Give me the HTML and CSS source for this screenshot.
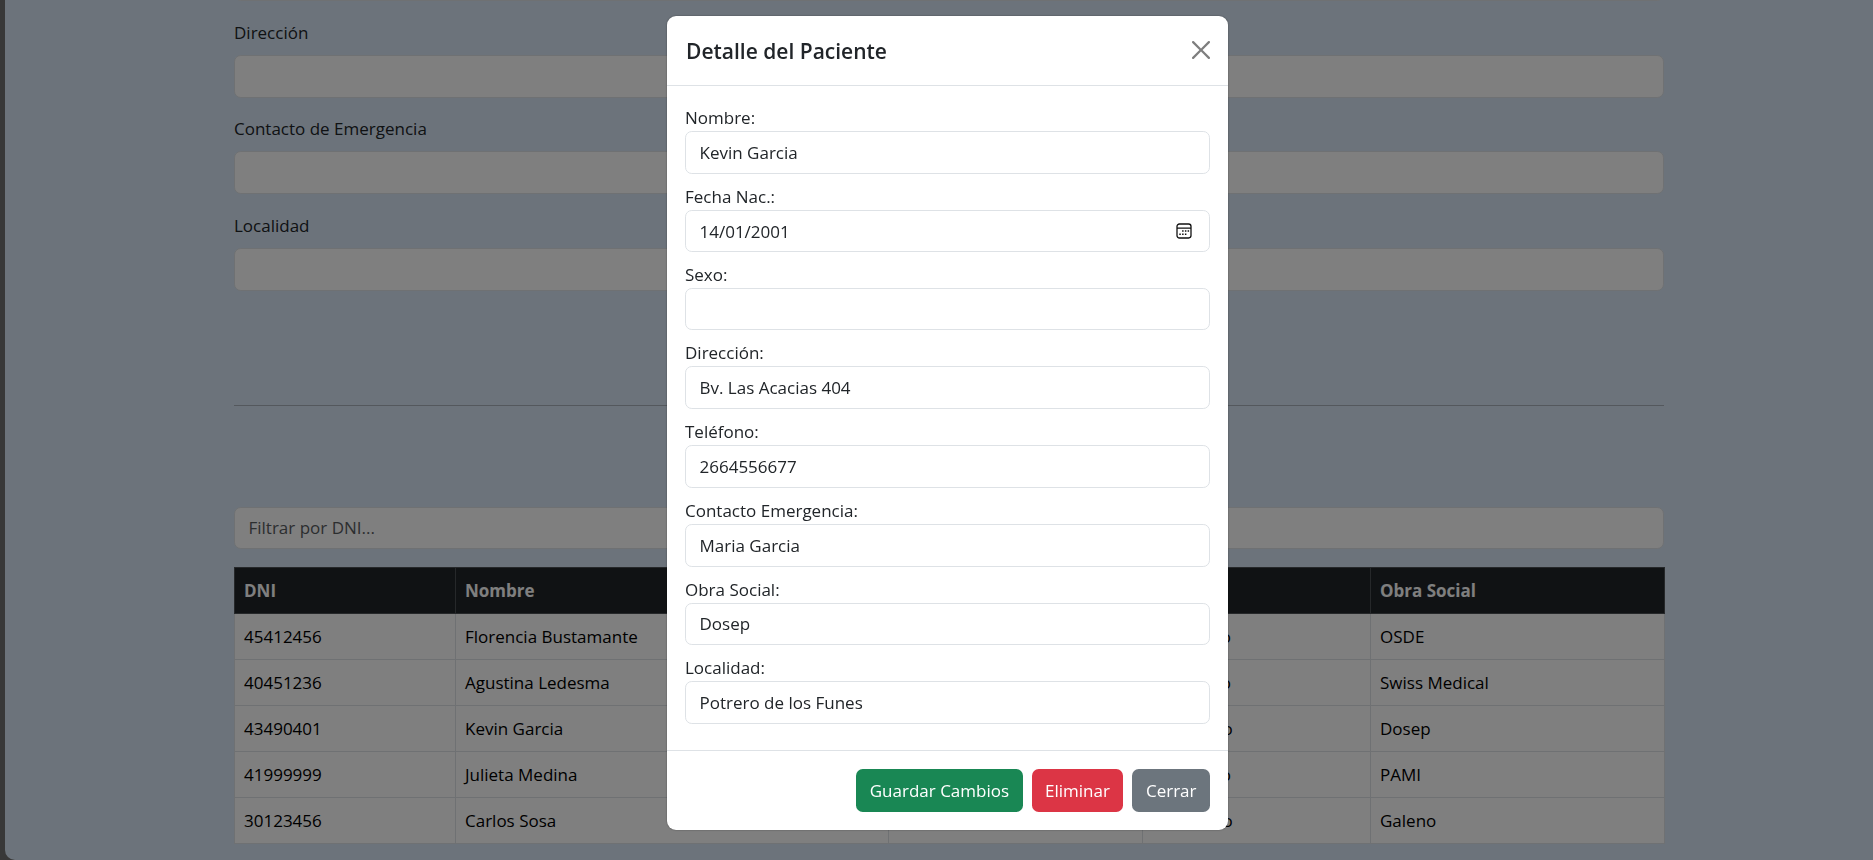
FILE: index.html
```html
<!DOCTYPE html>
<html lang="es">
<head>
<meta charset="utf-8">
<title>Pacientes</title>
<link rel="stylesheet" href="styles.css">
</head>
<body>
<div class="app">
  <div class="edge"></div>
  <main class="page">
    <div class="content">
      <div class="bg-field"><input class="bg-input" type="text"></div>
      <div class="bg-field"><label class="bg-label">Dirección</label><input class="bg-input" type="text"></div>
      <div class="bg-field"><label class="bg-label">Contacto de Emergencia</label><input class="bg-input" type="text"></div>
      <div class="bg-field"><label class="bg-label">Localidad</label><input class="bg-input" type="text"></div>
      <hr class="divider">
      <input class="bg-input filter" type="text" placeholder="Filtrar por DNI...">
      <table class="patients">
        <colgroup><col class="c1"><col class="c2"><col class="c3"><col class="c4"><col class="c5"></colgroup>
        <thead>
          <tr><th>DNI</th><th>Nombre</th><th></th><th></th><th>Obra Social</th></tr>
        </thead>
        <tbody>
          <tr><td>45412456</td><td>Florencia Bustamante</td><td></td><td>Femenino</td><td>OSDE</td></tr>
          <tr><td>40451236</td><td>Agustina Ledesma</td><td></td><td>Femenino</td><td>Swiss Medical</td></tr>
          <tr><td>43490401</td><td>Kevin Garcia</td><td></td><td>Masculino</td><td>Dosep</td></tr>
          <tr><td>41999999</td><td>Julieta Medina</td><td></td><td>Femenino</td><td>PAMI</td></tr>
          <tr><td>30123456</td><td>Carlos Sosa</td><td></td><td>Masculino</td><td>Galeno</td></tr>
        </tbody>
      </table>
    </div>
  </main>
</div>

<div class="backdrop"></div>

<div class="modal-wrap">
  <section class="modal">
    <header class="modal-head">
      <h1 class="modal-title">Detalle del Paciente</h1>
      <svg class="close" viewBox="0 0 16 16" aria-label="Cerrar"><path d="M.293.293a1 1 0 0 1 1.414 0L8 6.586 14.293.293a1 1 0 1 1 1.414 1.414L9.414 8l6.293 6.293a1 1 0 0 1-1.414 1.414L8 9.414l-6.293 6.293a1 1 0 0 1-1.414-1.414L6.586 8 .293 1.707a1 1 0 0 1 0-1.414z"/></svg>
    </header>
    <div class="modal-body">
      <div class="field"><label class="label">Nombre:</label><input class="input" type="text" value="Kevin Garcia"></div>
      <div class="field"><label class="label">Fecha Nac.:</label>
        <div class="date-wrap">
          <input class="input input-date" type="text" value="14/01/2001">
          <svg class="cal" viewBox="0 0 16 16"><rect x="1" y="1" width="14" height="14" rx="2.4" fill="none" stroke="#111" stroke-width="1.3"/><path d="M1 5.2h14" stroke="#111" stroke-width="1.2"/><path d="M6.1 7.3h1.5v1.5H6.1zM8.9 7.3h1.5v1.5H8.9zM11.6 7.3h1.5v1.5h-1.5zM3.3 10.5h1.5V12H3.3zM6.1 10.5h1.5V12H6.1zM8.9 10.5h1.5V12H8.9z" fill="#111"/></svg>
        </div>
      </div>
      <div class="field"><label class="label">Sexo:</label><input class="input" type="text"></div>
      <div class="field"><label class="label">Dirección:</label><input class="input" type="text" value="Bv. Las Acacias 404"></div>
      <div class="field"><label class="label">Teléfono:</label><input class="input" type="text" value="2664556677"></div>
      <div class="field"><label class="label">Contacto Emergencia:</label><input class="input" type="text" value="Maria Garcia"></div>
      <div class="field"><label class="label">Obra Social:</label><input class="input" type="text" value="Dosep"></div>
      <div class="field"><label class="label">Localidad:</label><input class="input" type="text" value="Potrero de los Funes"></div>
    </div>
    <footer class="modal-foot">
      <button class="btn btn-green" type="button">Guardar Cambios</button>
      <button class="btn btn-red" type="button">Eliminar</button>
      <button class="btn btn-gray" type="button">Cerrar</button>
    </footer>
  </section>
</div>
</body>
</html>
```

FILE: styles.css
```css
* { box-sizing: border-box; }
html, body { margin: 0; height: 100%; overflow: hidden; }
body {
  font-family: "Open Sans", "Liberation Sans", sans-serif;
  font-size: 17px;
  line-height: 27px;
  color: #212529;
  background: #707070;
}
.app { display: flex; height: 860px; }
.edge { width: 5px; flex: none; background: #707070; }
.page {
  flex: 1;
  background: #d9e7f6;
  border-bottom-left-radius: 10px;
  overflow: hidden;
}
.content { margin: -41.75px 209px 0 229px; }
.bg-field { margin-bottom: 17.75px; }
.bg-label { display: block; margin-bottom: 9px; }
.bg-input {
  display: block;
  width: 100%;
  height: 42.75px;
  padding: 0 13.5px;
  font: inherit;
  color: #212529;
  background: #fff;
  border: 1px solid #dee2e6;
  border-radius: 6.75px;
  outline: none;
}
.bg-input::placeholder { color: #595c5f; opacity: 1; }
.divider { margin: 114px 0 0; border: 0; border-top: 1px solid #a9b1bb; }
.filter { margin-top: 101px; height: 42px; }
.patients {
  width: 1430px;
  margin-top: 18px;
  table-layout: fixed;
  border-collapse: collapse;
  background: #fff;
}
.c1 { width: 221px; }
.c2 { width: 433px; }
.c3 { width: 254px; }
.c4 { width: 228px; }
.c5 { width: 294px; }
.patients th, .patients td {
  padding: 9px;
  height: 46px;
  border: 1px solid #dee2e6;
  text-align: left;
  font-weight: 400;
}
.patients td { color: #000; }
.patients th {
  background: #212529;
  border-color: #4d5154;
  color: #fff;
  font-weight: 700;
}
.backdrop {
  position: fixed;
  inset: 0;
  background: rgba(0, 0, 0, 0.5);
}
.modal-wrap {
  position: fixed;
  inset: 0;
  display: flex;
  align-items: flex-start;
  padding: 16px 0 0 667px;
}
.modal {
  width: 561px;
  background: #fff;
  border-radius: 9px;
  box-shadow: 0 0 2px rgba(0, 0, 0, 0.4);
  overflow: hidden;
}
.modal-head {
  display: flex;
  align-items: center;
  justify-content: space-between;
  height: 70px;
  padding: 0 18px 0 19px;
  border-bottom: 1px solid #dee2e6;
}
.modal-title { margin: 0; font-size: 21px; font-weight: 600; line-height: 30px; }
.close { width: 18px; height: 18px; margin-bottom: 2px; fill: #000; opacity: 0.5; }
.modal-body { padding: 18px 18px 17px; }
.field { margin-bottom: 9px; }
.label { display: block; }
.input {
  display: block;
  width: 100%;
  height: 42.75px;
  padding: 0 13.5px;
  font: inherit;
  color: #212529;
  background: #fff;
  border: 1px solid #dee2e6;
  border-radius: 6.75px;
  outline: none;
}
.date-wrap { position: relative; }
.input-date { height: 41.75px; padding-top: 1px; }
.cal { position: absolute; top: 13px; right: 18px; width: 16px; height: 16px; }
.modal-foot {
  display: flex;
  justify-content: flex-end;
  gap: 9px;
  padding: 18px;
  border-top: 1px solid #dee2e6;
}
.btn {
  height: 43px;
  padding: 0 13.5px;
  font: inherit;
  color: #fff;
  border: 0;
  border-radius: 6.75px;
}
.btn-green { background: #198754; }
.btn-red { background: #dc3545; }
.btn-gray { background: #6c757d; }
```
